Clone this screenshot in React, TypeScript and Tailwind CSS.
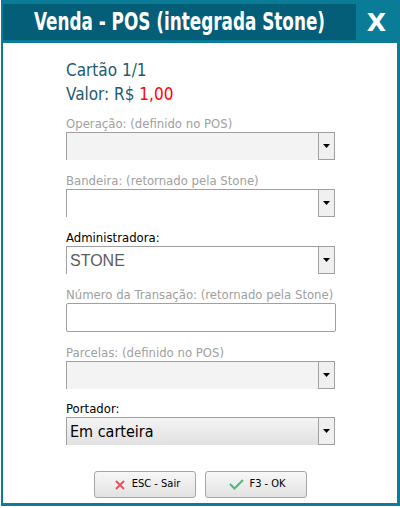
import React from "react";

const ui = "font-['DejaVu_Sans_Condensed','DejaVu_Sans',sans-serif]";

function Arrow() {
  return (
    <div className="w-[17px] shrink-0 border border-[#a0a0a0] bg-[#f0f0f0] flex items-center justify-center">
      <svg width="7" height="4" viewBox="0 0 7 4">
        <path d="M0 0H7L3.5 4Z" fill="#000" />
      </svg>
    </div>
  );
}

function Combo({ tone, children }: { tone: "off" | "white" | "grad"; children?: React.ReactNode }) {
  const bg =
    tone === "off"
      ? "bg-[#f3f3f3]"
      : tone === "white"
      ? "bg-white"
      : "bg-gradient-to-b from-[#f4f4f4] to-[#e1e1e1]";
  return (
    <div className="flex h-[28px] w-[269px]">
      <div className={`flex-1 flex items-center border-l border-t border-[#a0a0a0] pl-[3px] ${bg}`}>{children}</div>
      <Arrow />
    </div>
  );
}

function Label({ dim, children }: { dim?: boolean; children: React.ReactNode }) {
  return (
    <div className={`h-[16px] text-[13px] leading-[16px] ${dim ? "text-[#a0a0a0]" : "text-black"}`}>{children}</div>
  );
}

export default function App() {
  return (
    <div className="w-[400px] h-[508px] bg-white overflow-hidden">
      <div className="ml-[1px] w-[399px] h-[506px] bg-[#0b7c98] pt-[4px] pl-[2px] pr-[3px] pb-[3px] flex flex-col">
        <div className="flex h-[36px] shrink-0">
          <div className="w-[353px] bg-[#045e77] flex items-center justify-center overflow-hidden">
            <span className="inline-block whitespace-nowrap text-white font-bold text-[24px] leading-none font-['DejaVu_Sans_Condensed','DejaVu_Sans',sans-serif] scale-x-[0.78]">
              Venda - POS (integrada Stone)
            </span>
          </div>
          <div className="flex-1 flex items-center justify-center text-white font-bold text-[25px] leading-none font-['DejaVu_Sans',sans-serif]">
            X
          </div>
        </div>

        <div className={`mt-[3px] flex-1 bg-white pl-[63px] pt-[15px] ${ui}`}>
          <div className="text-[17px] leading-[24px] text-[#1d5b6f]">Cartão 1/1</div>
          <div className="text-[17px] leading-[24px] text-[#1d5b6f]">
            Valor: R$ <span className="text-[#ff0000]">1,00</span>
          </div>

          <div className="mt-[10px] flex flex-col gap-[13px]">
            <div>
              <Label dim>Operação: (definido no POS)</Label>
              <Combo tone="off" />
            </div>
            <div>
              <Label dim>Bandeira: (retornado pela Stone)</Label>
              <Combo tone="white" />
            </div>
            <div>
              <Label>Administradora:</Label>
              <Combo tone="white">
                <span className="text-[16px] text-[#5c5c5c] font-['Liberation_Sans',sans-serif]">STONE</span>
              </Combo>
            </div>
            <div>
              <Label dim>Número da Transação: (retornado pela Stone)</Label>
              <div className="h-[29px] w-[270px] border border-[#a0a0a0] rounded-[2px] bg-white" />
            </div>
            <div>
              <Label dim>Parcelas: (definido no POS)</Label>
              <Combo tone="off" />
            </div>
            <div className="-mt-[1px]">
              <Label>Portador:</Label>
              <Combo tone="grad">
                <span className="text-[16px] text-black">Em carteira</span>
              </Combo>
            </div>
          </div>

          <div className="mt-[26px] -ml-[63px] flex justify-center gap-[9px] text-[11px]">
            <button className="w-[102px] h-[27px] rounded-[3px] border border-[#a6a6a6] bg-gradient-to-b from-[#f7f7f7] to-[#e2e2e2] flex items-center justify-center gap-[7px] pl-[6px] text-black">
              <svg width="10" height="10" viewBox="0 0 10 10">
                <path d="M1 1L9 9M9 1L1 9" stroke="#e8505a" strokeWidth="2" />
              </svg>
              ESC - Sair
            </button>
            <button className="w-[102px] h-[27px] rounded-[3px] border border-[#a6a6a6] bg-gradient-to-b from-[#f7f7f7] to-[#e2e2e2] flex items-center justify-center gap-[5px] pl-[4px] text-black">
              <svg width="15" height="11" viewBox="0 0 15 11">
                <path d="M1 5L5.5 9.5L14 1" stroke="#4cbb7a" strokeWidth="2" fill="none" />
              </svg>
              F3 - OK
            </button>
          </div>
        </div>
      </div>
    </div>
  );
}
